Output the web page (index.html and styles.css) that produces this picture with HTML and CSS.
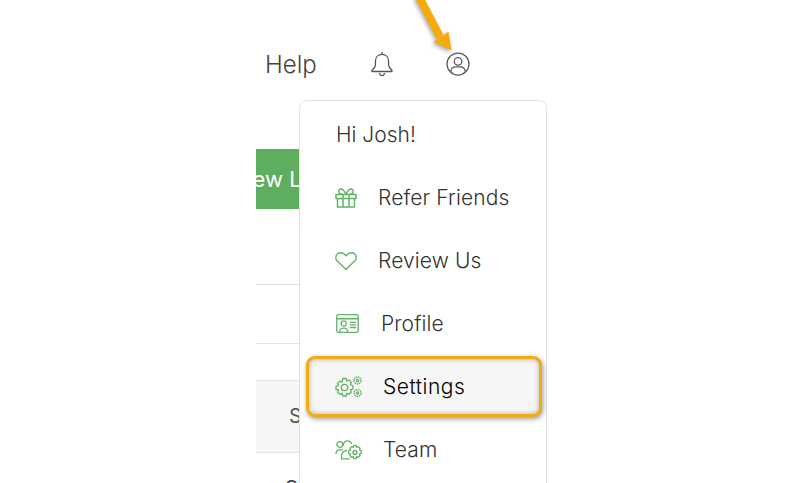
FILE: index.html
```html
<!DOCTYPE html>
<html lang="en">
<head>
<meta charset="utf-8">
<title>Account menu</title>
<link rel="stylesheet" href="styles.css">
</head>
<body>
<div class="stage">
  <main class="page">
    <header class="topbar">
      <span class="help">Help</span>
      <svg class="bell" viewBox="0 0 24 26" fill="none" stroke="#555" stroke-width="1.300" stroke-linecap="round" stroke-linejoin="round"><path d="M12 1.200v2.200M12 3.400c-4 0-6.600 3-6.600 7v3.600c0 2.400-1.800 3.800-3.300 5.200-.5.500-.2 1.300.5 1.300h18.800c.7 0 1-.8.500-1.300-1.500-1.400-3.300-2.800-3.300-5.200v-3.600c0-4-2.600-7-6.600-7z"/><path d="M9.500 22.500c.5 1.500 1.400 2.200 2.500 2.200s2-.7 2.500-2.200"/></svg>
      <svg class="user" viewBox="0 0 24 24" fill="none" stroke="#5a5a5a" stroke-width="1.250" stroke-linecap="round"><circle cx="12" cy="12" r="11"/><circle cx="12" cy="9.300" r="3.800"/><path d="M4.800 19.500c.3-3 2.700-4.600 5-4.600h4.400c2.300 0 4.700 1.600 5 4.600"/></svg>
    </header>
    <div class="action-row"><span class="new-btn">New Lead</span></div>
    <div class="rule rule-a"></div>
    <div class="rule rule-b"></div>
    <div class="table-head"><span>S</span></div>
    <div class="table-row"><span>S</span></div>
  </main>

  <nav class="menu">
    <div class="greeting">Hi Josh!</div>
    <a class="item item-refer">
      <svg class="ico" viewBox="0 0 22 20" fill="none" stroke="#66b267" stroke-width="1.500" stroke-linejoin="round" stroke-linecap="round"><path d="M1 6.500h20v4H1zM2.500 10.500V19h17v-8.500M8 6.500V19M14 6.500V19M11 6.500C9.500 3 8 1 6 1 4.300 1 3.500 2.300 3.800 3.800 4.100 5.500 6 6.500 11 6.500zM11 6.500c1.500-3.500 3-5.500 5-5.500 1.700 0 2.500 1.300 2.200 2.800C17.900 5.500 16 6.500 11 6.500z"/></svg>
      <span>Refer Friends</span>
    </a>
    <a class="item item-review">
      <svg class="ico" viewBox="0 0 22 19" fill="none" stroke="#66b267" stroke-width="1.400" stroke-linejoin="round"><path d="M11 18 2.300 9.600C.2 7.500.4 4.300 2.300 2.500 4.500.5 8 .7 11 4.200 14 .7 17.500.5 19.700 2.500c1.900 1.800 2.100 5 0 7.100z"/></svg>
      <span>Review Us</span>
    </a>
    <a class="item item-profile">
      <svg class="ico ico-wide" viewBox="0 0 24 20" fill="none" stroke="#66b267" stroke-width="1.400" stroke-linecap="round"><rect x=".7" y=".7" width="22.600" height="18.600" rx="1.600"/><path d="M.7 5h22.600"/><circle cx="8" cy="10" r="2.700"/><path d="M3.800 19c0-3 1.700-4.200 4.200-4.200s4.200 1.200 4.200 4.200M15 8.800h5.500M15 11.500h5.500M15 14.200h5.500"/></svg>
      <span>Profile</span>
    </a>
    <a class="item item-settings">
      <svg class="ico ico-gears" viewBox="0 0 27 22" fill="none" stroke="#66b267" stroke-width="1.300"><circle cx="9.500" cy="11.500" r="3.200"/><path stroke-linejoin="round" d="M7.800 2.500h3.400l.6 2.500 2.200-1 2.500 2.400-1.100 2.200 2.600.9v3.400l-2.600.8 1.100 2.300-2.500 2.400-2.200-1.100-.6 2.700H7.800l-.6-2.700-2.200 1.100-2.500-2.400 1.100-2.300L1 13.700v-3.400l2.600-.9-1.100-2.200L5 5.200l2.200 1z"/><circle cx="22.500" cy="4.500" r="3.500" stroke-dasharray="1.700 .6"/><circle cx="22.500" cy="4.500" r="1.200"/><circle cx="22.500" cy="17" r="3.500" stroke-dasharray="1.700 .6"/><circle cx="22.500" cy="17" r="1.200"/></svg>
      <span>Settings</span>
    </a>
    <a class="item item-team">
      <svg class="ico ico-gears" viewBox="0 0 27 20" fill="none" stroke="#66b267" stroke-width="1.300" stroke-linecap="round"><circle cx="4.800" cy="4.500" r="2.900"/><path d="M1 13.500c.2-2.500 1.800-3.600 4-3.600h2.500M8.500 5c0-2.400 1.800-4.200 4-4.200 1.900 0 3.400 1.100 4 2.800M11.500 10.500c-3.500.8-5 3.500-5 6v2.300h8"/><circle cx="20" cy="12.500" r="2"/><path stroke-linejoin="round" d="M18.800 5.500h2.400l.5 1.800 1.700-.7 1.700 1.600-.8 1.700 1.900.7v2.800l-1.900.7.800 1.700-1.700 1.600-1.700-.8-.5 1.900h-2.400l-.5-1.900-1.700.8-1.700-1.600.8-1.700-1.900-.7v-2.800l1.900-.7-.8-1.700 1.700-1.600 1.700.7z"/></svg>
      <span>Team</span>
    </a>
  </nav>

  <svg class="arrow" viewBox="0 0 50 60"><path d="M8 -5 30 37" stroke="#f6ab0d" stroke-width="8" fill="none"/><path d="M38.500 31.500 41.500 50.500 23.500 42z" fill="#f6ab0d"/></svg>
</div>
</body>
</html>
```

FILE: styles.css
```css
*, *::before { box-sizing: border-box; }

html, body {
  margin: 0;
  background: #fff;
}

.stage {
  position: relative;
  width: 803px;
  height: 483px;
  overflow: hidden;
  font-family: Inter, "Liberation Sans", sans-serif;
  color: #444;
}

.page {
  margin-left: 256px;
  width: 291px;
  display: flex;
  flex-direction: column;
}

.topbar {
  height: 40px;
  margin-top: 44px;
  padding-left: 9px;
  display: flex;
  align-items: center;
}

.help {
  font-size: 24px;
  font-weight: 300;
  color: #444;
  width: 105px;
}

.bell {
  width: 24px;
  height: 26px;
}

.user {
  width: 24px;
  height: 24px;
  margin-left: 52px;
}

.action-row {
  margin-top: 65px;
  height: 60px;
}

.new-btn {
  display: block;
  height: 60px;
  width: 60px;
  background: #5fae5f;
  color: #fff;
  font-size: 22px;
  line-height: 60px;
  white-space: nowrap;
  overflow: hidden;
  text-indent: -20px;
}

.rule {
  height: 1px;
  background: #e3e3e3;
}

.rule-a { margin-top: 75px; }
.rule-b { margin-top: 58px; }

.table-head {
  margin-top: 36px;
  height: 73px;
  background: #f6f6f6;
  border-top: 1px solid #e3e3e3;
  border-bottom: 1px solid #e3e3e3;
  padding-left: 33px;
  font-size: 20px;
  line-height: 71px;
  color: #555;
}

.table-row {
  padding-left: 29px;
  padding-top: 23px;
  font-size: 20px;
  color: #444;
}

.menu {
  position: absolute;
  left: 299px;
  top: 100px;
  width: 248px;
  height: 420px;
  background: #fff;
  border: 1px solid #dfe1e6;
  border-radius: 8px;
  display: flex;
  flex-direction: column;
}

.greeting {
  margin: 22px 0 0 36px;
  font-size: 21px;
  font-weight: 300;
  line-height: 24px;
  color: #333;
}

.item {
  display: flex;
  align-items: center;
  height: 63px;
  padding-left: 35px;
  font-size: 21px;
  font-weight: 300;
  letter-spacing: .12px;
  color: #333;
}

.item-refer { margin-top: 19px; }

.ico {
  flex: none;
  width: 22px;
  height: 20px;
  margin-right: 21px;
}

.ico-wide {
  width: 23px;
  height: 19px;
  margin-left: 1px;
  margin-right: 22px;
}

.ico-gears {
  width: 27px;
  height: 22px;
  margin-right: 21px;
}

.item-settings {
  position: relative;
  color: #000;
  letter-spacing: .5px;
}

.item-settings::before {
  content: "";
  position: absolute;
  left: 6px;
  top: 1px;
  width: 236px;
  height: 61px;
  background: #f6f6f6;
  border: 3px solid #f6ab0d;
  border-radius: 9px;
  box-shadow: 1px 2px 5px rgba(0, 0, 0, .4), inset 0 0 5px rgba(0, 0, 0, .3);
}

.item-settings > * {
  position: relative;
}

.arrow {
  position: absolute;
  left: 410px;
  top: 0;
  width: 50px;
  height: 60px;
  overflow: visible;
  filter: drop-shadow(-1px 2px 2px rgba(0, 0, 0, .35));
}
```
